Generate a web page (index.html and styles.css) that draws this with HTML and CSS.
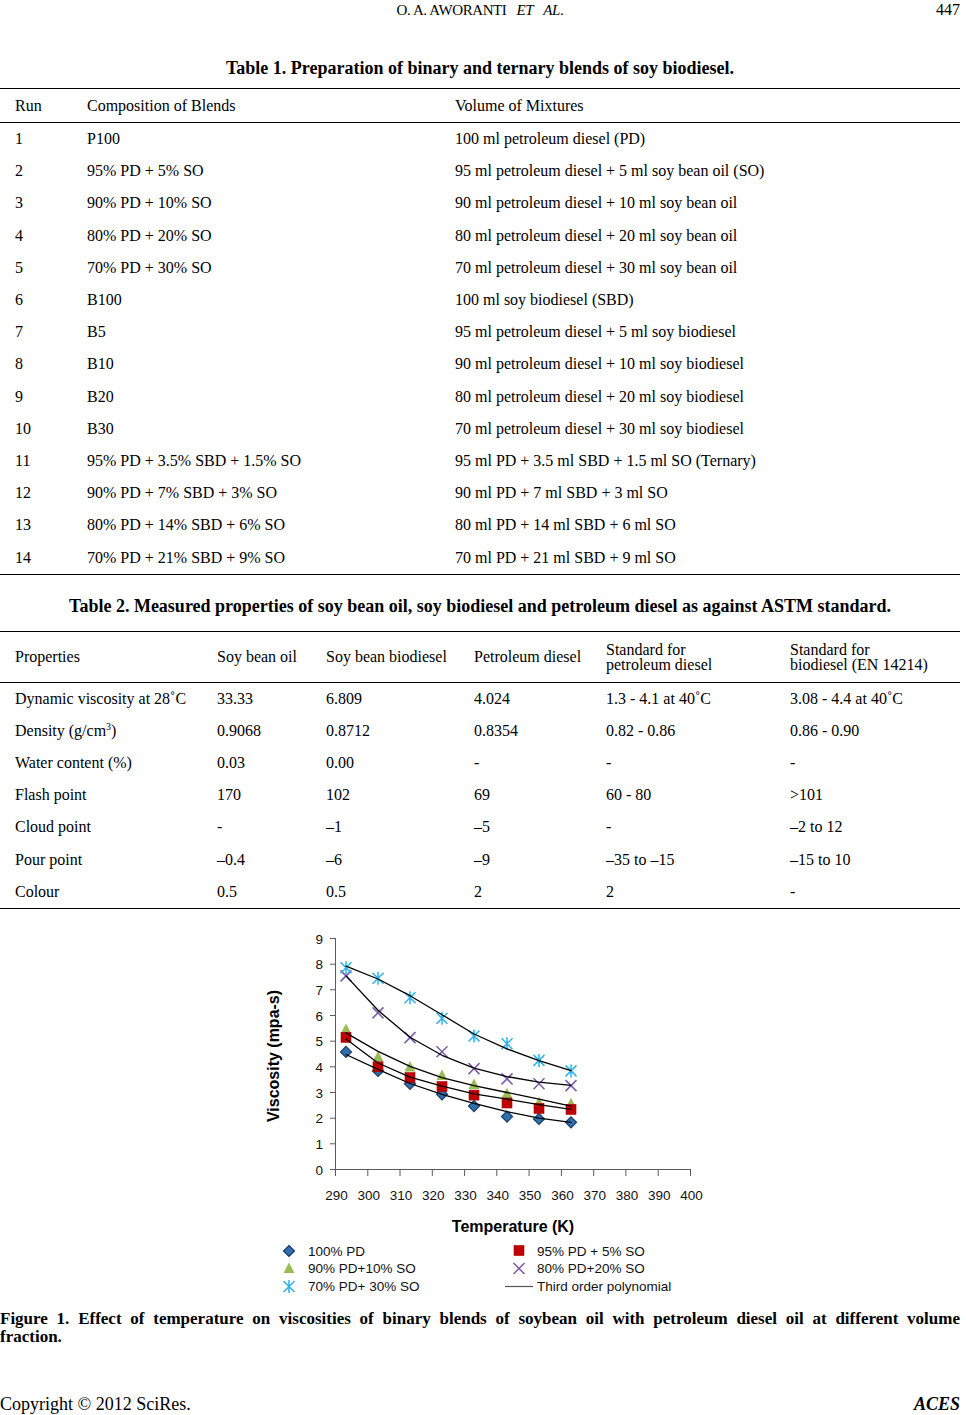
FILE: index.html
```html
<!DOCTYPE html>
<html lang="en">
<head>
<meta charset="utf-8">
<title>O. A. Aworanti et al. 447</title>
<link rel="stylesheet" href="styles.css">
</head>
<body>
<div class="page">
  <header class="running-head">
    <span></span>
    <span class="authors">O. A. AWORANTI&nbsp;&nbsp; <i>ET</i>&nbsp;&nbsp; <i>AL</i>.</span>
    <span class="pageno">447</span>
  </header>

  <p class="caption cap1">Table 1. Preparation of binary and ternary blends of soy biodiesel.</p>
  <table class="tbl tbl1">
    <colgroup><col class="c1"><col class="c2"><col class="c3"></colgroup>
    <thead>
      <tr><th>Run</th><th>Composition of Blends</th><th>Volume of Mixtures</th></tr>
    </thead>
    <tbody>
      <tr><td>1</td><td>P100</td><td>100 ml petroleum diesel (PD)</td></tr>
      <tr><td>2</td><td>95% PD + 5% SO</td><td>95 ml petroleum diesel + 5 ml soy bean oil (SO)</td></tr>
      <tr><td>3</td><td>90% PD + 10% SO</td><td>90 ml petroleum diesel + 10 ml soy bean oil</td></tr>
      <tr><td>4</td><td>80% PD + 20% SO</td><td>80 ml petroleum diesel + 20 ml soy bean oil</td></tr>
      <tr><td>5</td><td>70% PD + 30% SO</td><td>70 ml petroleum diesel + 30 ml soy bean oil</td></tr>
      <tr><td>6</td><td>B100</td><td>100 ml soy biodiesel (SBD)</td></tr>
      <tr><td>7</td><td>B5</td><td>95 ml petroleum diesel + 5 ml soy biodiesel</td></tr>
      <tr><td>8</td><td>B10</td><td>90 ml petroleum diesel + 10 ml soy biodiesel</td></tr>
      <tr><td>9</td><td>B20</td><td>80 ml petroleum diesel + 20 ml soy biodiesel</td></tr>
      <tr><td>10</td><td>B30</td><td>70 ml petroleum diesel + 30 ml soy biodiesel</td></tr>
      <tr><td>11</td><td>95% PD + 3.5% SBD + 1.5% SO</td><td>95 ml PD + 3.5 ml SBD + 1.5 ml SO (Ternary)</td></tr>
      <tr><td>12</td><td>90% PD + 7% SBD + 3% SO</td><td>90 ml PD + 7 ml SBD + 3 ml SO</td></tr>
      <tr><td>13</td><td>80% PD + 14% SBD + 6% SO</td><td>80 ml PD + 14 ml SBD + 6 ml SO</td></tr>
      <tr><td>14</td><td>70% PD + 21% SBD + 9% SO</td><td>70 ml PD + 21 ml SBD + 9 ml SO</td></tr>
    </tbody>
  </table>

  <p class="caption cap2">Table 2. Measured properties of soy bean oil, soy biodiesel and petroleum diesel as against ASTM standard.</p>
  <table class="tbl tbl2">
    <colgroup><col class="d1"><col class="d2"><col class="d3"><col class="d4"><col class="d5"><col class="d6"></colgroup>
    <thead>
      <tr>
        <th>Properties</th><th>Soy bean oil</th><th>Soy bean biodiesel</th><th>Petroleum diesel</th>
        <th class="two">Standard for<br>petroleum diesel</th><th class="two">Standard for<br>biodiesel (EN 14214)</th>
      </tr>
    </thead>
    <tbody>
      <tr><td>Dynamic viscosity at 28˚C</td><td>33.33</td><td>6.809</td><td>4.024</td><td>1.3 - 4.1 at 40˚C</td><td>3.08 - 4.4 at 40˚C</td></tr>
      <tr><td>Density (g/cm<sup>3</sup>)</td><td>0.9068</td><td>0.8712</td><td>0.8354</td><td>0.82 - 0.86</td><td>0.86 - 0.90</td></tr>
      <tr><td>Water content (%)</td><td>0.03</td><td>0.00</td><td>-</td><td>-</td><td>-</td></tr>
      <tr><td>Flash point</td><td>170</td><td>102</td><td>69</td><td>60 - 80</td><td>&gt;101</td></tr>
      <tr><td>Cloud point</td><td>-</td><td>–1</td><td>–5</td><td>-</td><td>–2 to 12</td></tr>
      <tr><td>Pour point</td><td>–0.4</td><td>–6</td><td>–9</td><td>–35 to –15</td><td>–15 to 10</td></tr>
      <tr><td>Colour</td><td>0.5</td><td>0.5</td><td>2</td><td>2</td><td>-</td></tr>
    </tbody>
  </table>

  <svg class="chart" width="460" height="370" viewBox="250 925 460 370" xmlns="http://www.w3.org/2000/svg">
    <defs>
      <path id="mk-dia" d="M0,-5.5 L5.5,0 L0,5.5 L-5.5,0Z" fill="#2E70AE" stroke="#1A3A60" stroke-width="1.2"/>
      <rect id="mk-sq" x="-5" y="-5" width="10" height="10" fill="#C00000" stroke="#A30000" stroke-width="0.6"/>
      <path id="mk-tri" d="M0,-6.5 L5.5,4 L-5.5,4Z" fill="#9BBB59"/>
      <path id="mk-x" d="M-5.5,-5.5 L5.5,5.5 M5.5,-5.5 L-5.5,5.5" stroke="#7B5BA8" stroke-width="1.5" fill="none"/>
      <path id="mk-ast" d="M-5.5,-5.5 L5.5,5.5 M5.5,-5.5 L-5.5,5.5 M0,-6.5 L0,6.5" stroke="#2DB3EA" stroke-width="1.5" fill="none"/>
    </defs>

    <g class="axis">
      <line x1="335.5" y1="937" x2="335.5" y2="1169"/>
      <line x1="335" y1="1168.5" x2="691" y2="1168.5"/>
      <line x1="330" y1="1168.5" x2="335.5" y2="1168.5"/>
      <line x1="330" y1="1142.8" x2="335.5" y2="1142.8"/>
      <line x1="330" y1="1117.2" x2="335.5" y2="1117.2"/>
      <line x1="330" y1="1091.5" x2="335.5" y2="1091.5"/>
      <line x1="330" y1="1065.8" x2="335.5" y2="1065.8"/>
      <line x1="330" y1="1040.2" x2="335.5" y2="1040.2"/>
      <line x1="330" y1="1014.5" x2="335.5" y2="1014.5"/>
      <line x1="330" y1="988.8" x2="335.5" y2="988.8"/>
      <line x1="330" y1="963.2" x2="335.5" y2="963.2"/>
      <line x1="330" y1="937.5" x2="335.5" y2="937.5"/>
      <line x1="335.5" y1="1168.5" x2="335.5" y2="1175"/>
      <line x1="367.8" y1="1168.5" x2="367.8" y2="1175"/>
      <line x1="400" y1="1168.5" x2="400" y2="1175"/>
      <line x1="432.3" y1="1168.5" x2="432.3" y2="1175"/>
      <line x1="464.6" y1="1168.5" x2="464.6" y2="1175"/>
      <line x1="496.8" y1="1168.5" x2="496.8" y2="1175"/>
      <line x1="529.1" y1="1168.5" x2="529.1" y2="1175"/>
      <line x1="561.4" y1="1168.5" x2="561.4" y2="1175"/>
      <line x1="593.7" y1="1168.5" x2="593.7" y2="1175"/>
      <line x1="625.9" y1="1168.5" x2="625.9" y2="1175"/>
      <line x1="658.2" y1="1168.5" x2="658.2" y2="1175"/>
      <line x1="690.5" y1="1168.5" x2="690.5" y2="1175"/>
    </g>

    <g class="ylabels">
      <text x="323" y="1173.5">0</text>
      <text x="323" y="1147.8">1</text>
      <text x="323" y="1122.2">2</text>
      <text x="323" y="1096.5">3</text>
      <text x="323" y="1070.8">4</text>
      <text x="323" y="1045.2">5</text>
      <text x="323" y="1019.5">6</text>
      <text x="323" y="993.8">7</text>
      <text x="323" y="968.2">8</text>
      <text x="323" y="942.5">9</text>
    </g>
    <g class="xlabels">
      <text x="336.5" y="1199">290</text>
      <text x="368.8" y="1199">300</text>
      <text x="401" y="1199">310</text>
      <text x="433.3" y="1199">320</text>
      <text x="465.6" y="1199">330</text>
      <text x="497.8" y="1199">340</text>
      <text x="530.1" y="1199">350</text>
      <text x="562.4" y="1199">360</text>
      <text x="594.7" y="1199">370</text>
      <text x="626.9" y="1199">380</text>
      <text x="659.2" y="1199">390</text>
      <text x="691.5" y="1199">400</text>
    </g>
    <text class="axis-title" x="513" y="1231">Temperature (K)</text>
    <text class="axis-title" transform="translate(279,1055) rotate(-90)" x="0" y="0">Viscosity (mpa-s)</text>

    <g>
      <use href="#mk-dia" x="346" y="1050.9"/><use href="#mk-dia" x="378" y="1069.9"/><use href="#mk-dia" x="410" y="1082.8"/><use href="#mk-dia" x="442" y="1093.3"/>
      <use href="#mk-dia" x="474" y="1105.1"/><use href="#mk-dia" x="507" y="1115.6"/><use href="#mk-dia" x="539" y="1117.9"/><use href="#mk-dia" x="571" y="1121.3"/>
    </g>
    <g>
      <use href="#mk-tri" x="346" y="1029.1"/><use href="#mk-tri" x="378" y="1056.6"/><use href="#mk-tri" x="410" y="1066.6"/><use href="#mk-tri" x="442" y="1075.1"/>
      <use href="#mk-tri" x="474" y="1084"/><use href="#mk-tri" x="507" y="1093.3"/><use href="#mk-tri" x="539" y="1102.3"/><use href="#mk-tri" x="571" y="1103.3"/>
    </g>
    <g>
      <use href="#mk-sq" x="346" y="1036.3"/><use href="#mk-sq" x="378" y="1065.8"/><use href="#mk-sq" x="410" y="1076.6"/><use href="#mk-sq" x="442" y="1085.6"/>
      <use href="#mk-sq" x="474" y="1094.1"/><use href="#mk-sq" x="507" y="1102"/><use href="#mk-sq" x="539" y="1107.4"/><use href="#mk-sq" x="571" y="1108.4"/>
    </g>
    <g>
      <use href="#mk-x" x="346" y="974.9"/><use href="#mk-x" x="378" y="1011.9"/><use href="#mk-x" x="410" y="1036.6"/><use href="#mk-x" x="442" y="1050.7"/>
      <use href="#mk-x" x="474" y="1067.6"/><use href="#mk-x" x="507" y="1077.9"/><use href="#mk-x" x="539" y="1082.8"/><use href="#mk-x" x="571" y="1084.6"/>
    </g>
    <g>
      <use href="#mk-ast" x="346" y="966.7"/><use href="#mk-ast" x="378" y="977.3"/><use href="#mk-ast" x="410" y="996.8"/><use href="#mk-ast" x="442" y="1017.3"/>
      <use href="#mk-ast" x="474" y="1035"/><use href="#mk-ast" x="507" y="1042.7"/><use href="#mk-ast" x="539" y="1059.4"/><use href="#mk-ast" x="571" y="1069.9"/>
    </g>

    <g class="trend">
      <polyline points="346,1053.5 378,1068.4 410,1082.5 442,1093.3 474,1102.3 507,1110.7 539,1117.2 571,1121.3"/>
      <polyline points="346,1038.1 378,1062 410,1076.1 442,1085.1 474,1092.8 507,1098.2 539,1103.6 571,1108.4"/>
      <polyline points="346,1031.9 378,1050.4 410,1065.3 442,1076.6 474,1084.6 507,1091.5 539,1098.2 571,1105.1"/>
      <polyline points="346,974.9 378,1009.3 410,1036.3 442,1054.3 474,1067.1 507,1075.6 539,1081.2 571,1084.3"/>
      <polyline points="346,965.2 378,978 410,994.7 442,1013.7 474,1033 507,1047.9 539,1059.7 571,1069.7"/>
    </g>

    <g class="legend">
      <use href="#mk-dia" x="289" y="1250"/>
      <text x="308" y="1254.5">100% PD</text>
      <use href="#mk-sq" x="519" y="1249.5"/>
      <text x="537" y="1254.5">95% PD + 5% SO</text>
      <use href="#mk-tri" x="289" y="1268"/>
      <text x="308" y="1272">90% PD+10% SO</text>
      <use href="#mk-x" x="519" y="1267.5"/>
      <text x="537" y="1272">80% PD+20% SO</text>
      <use href="#mk-ast" x="289" y="1285.5"/>
      <text x="308" y="1290">70% PD+ 30% SO</text>
      <line class="leg-line" x1="505" y1="1285.5" x2="533" y2="1285.5"/>
      <text x="537" y="1290">Third order polynomial</text>
    </g>
  </svg>

  <p class="fig-cap"><span class="fig-line1">Figure 1. Effect of temperature on viscosities of binary blends of soybean oil with petroleum diesel oil at different volume</span>fraction.</p>

  <footer class="page-foot">
    <span>Copyright © 2012 SciRes.</span>
    <span class="journal">ACES</span>
  </footer>
</div>
</body>
</html>
```

FILE: styles.css
```css
html, body {
  margin: 0;
  padding: 0;
  background: #fff;
}
body {
  font-family: "Liberation Serif", "Times New Roman", serif;
  color: #000;
  font-size: 16px;
}
.page {
  width: 960px;
}
.running-head {
  display: grid;
  grid-template-columns: 1fr auto 1fr;
  height: 20px;
  line-height: 20px;
  font-size: 15px;
  letter-spacing: -0.4px;
}
.running-head .pageno {
  justify-self: end;
  font-size: 16px;
  letter-spacing: 0;
}
.caption {
  margin: 0;
  text-align: center;
  font-weight: bold;
  font-size: 18px;
  line-height: 20px;
}
.cap1 {
  margin-top: 38px;
}
.cap2 {
  margin-top: 21px;
}
.tbl {
  width: 960px;
  border-collapse: collapse;
  table-layout: fixed;
  font-size: 16px;
}
.tbl1 {
  margin-top: 10px;
}
.tbl2 {
  margin-top: 15px;
}
.tbl th {
  font-weight: normal;
  text-align: left;
  vertical-align: middle;
  padding: 0;
}
.tbl td {
  padding: 0;
  text-align: left;
  vertical-align: middle;
  height: 32.2px;
  line-height: 18px;
  white-space: nowrap;
}
.tbl th:first-child, .tbl td:first-child {
  padding-left: 15px;
}
.tbl thead tr {
  border-top: 1.5px solid #000;
  border-bottom: 1px solid #000;
}
.tbl tbody tr:last-child {
  border-bottom: 1.5px solid #000;
}
.tbl1 th {
  height: 33px;
}
.tbl2 th {
  height: 50px;
  line-height: 15px;
}
.tbl sup {
  font-size: 10px;
  line-height: 0;
  vertical-align: 6px;
}
.c1 { width: 87px; }
.c2 { width: 368px; }
.c3 { width: 505px; }
.d1 { width: 217px; }
.d2 { width: 109px; }
.d3 { width: 148px; }
.d4 { width: 132px; }
.d5 { width: 184px; }
.d6 { width: 170px; }

.chart {
  display: block;
  margin: 17px 0 0 250px;
  font-family: "Liberation Sans", Arial, sans-serif;
}
.axis line {
  stroke: #5a5a5a;
  stroke-width: 1;
}
.ylabels text {
  font-size: 13.5px;
  text-anchor: end;
  fill: #111;
}
.xlabels text {
  font-size: 13.5px;
  text-anchor: middle;
  fill: #111;
}
.axis-title {
  font-size: 16px;
  font-weight: bold;
  text-anchor: middle;
  fill: #000;
}
.trend polyline {
  fill: none;
  stroke: #000;
  stroke-width: 1.3;
  stroke-linejoin: round;
  stroke-linecap: round;
}
.legend text {
  font-size: 13.5px;
  fill: #111;
}
.leg-line {
  stroke: #555;
  stroke-width: 1.2;
}

.fig-cap {
  margin: 14px 0 0;
  font-weight: bold;
  font-size: 17px;
  line-height: 18px;
  text-align: justify;
}
.fig-line1 {
  display: block;
  text-align: justify;
  text-align-last: justify;
}
.page-foot {
  margin-top: 48px;
  display: flex;
  justify-content: space-between;
  font-size: 18px;
  line-height: 20px;
}
.journal {
  font-weight: bold;
  font-style: italic;
}
```
